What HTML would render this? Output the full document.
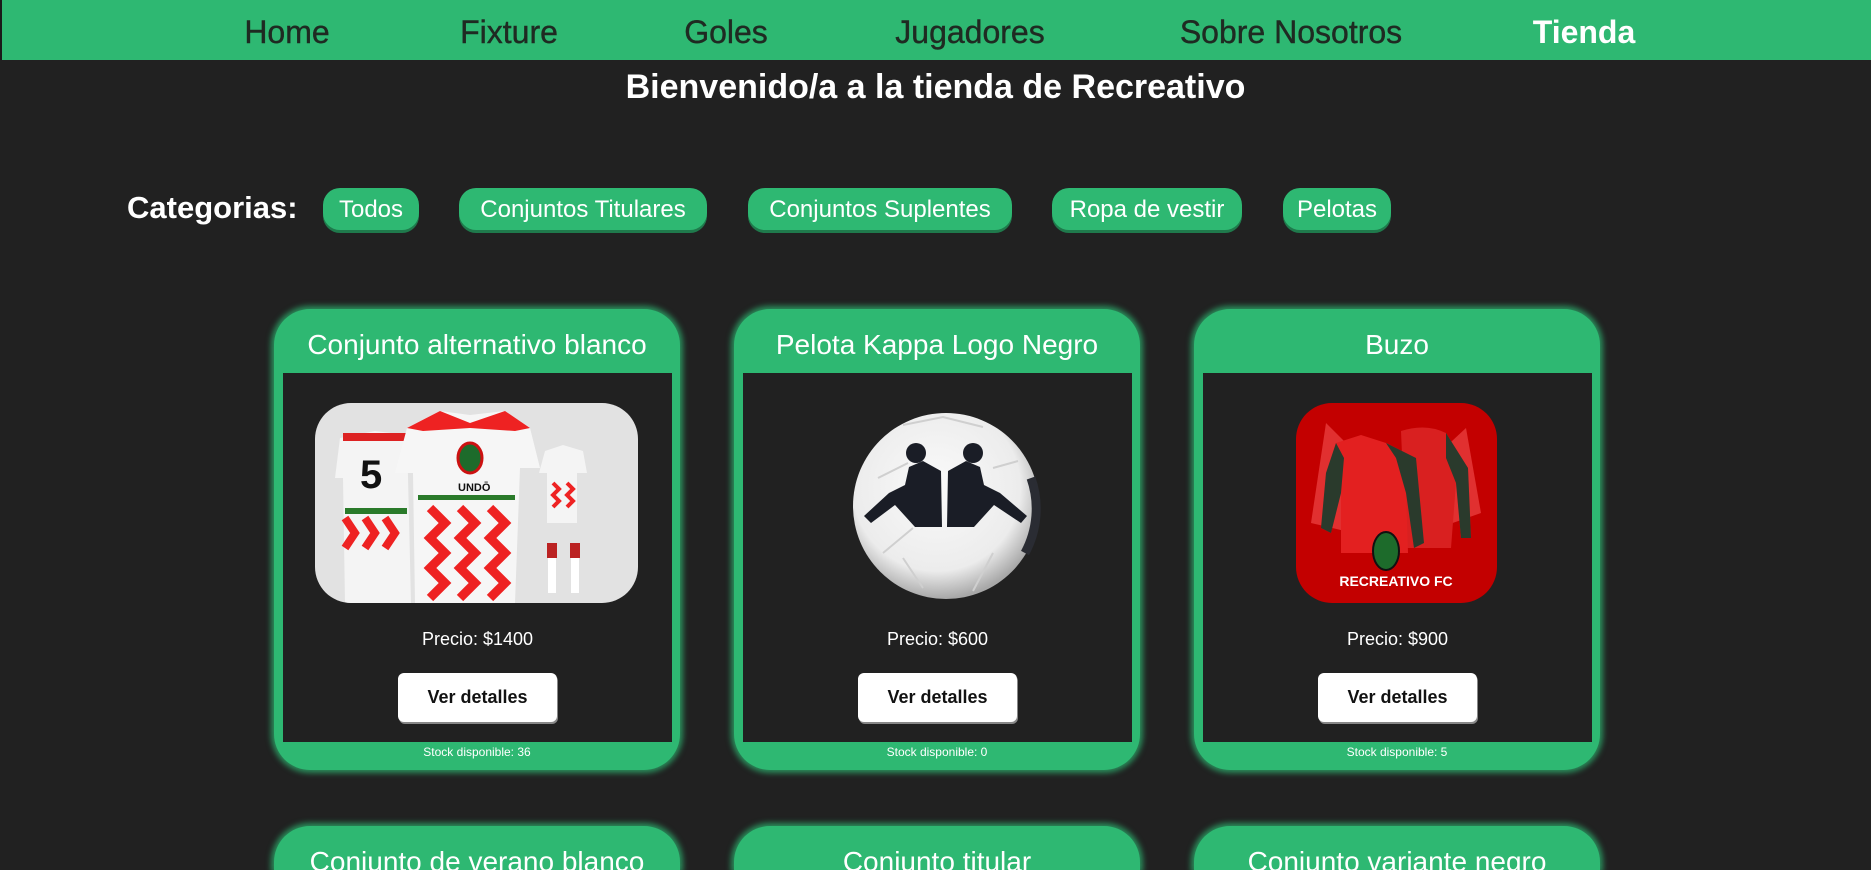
<!DOCTYPE html>
<html><head><meta charset="utf-8">
<style>
*{margin:0;padding:0;box-sizing:border-box}
html,body{width:1871px;height:870px;overflow:hidden}
body{background:#212121;font-family:"Liberation Sans",sans-serif;position:relative;color:#fff}
#wrap{position:absolute;left:0;top:0;width:1871px;height:870px;overflow:hidden}
.nav{position:absolute;left:0;top:0;width:1871px;height:60px;background:#2eb872;border-left:2px solid #1a1a1a}
.nav span{position:absolute;top:14px;font-size:32px;color:#1f2a22;transform:translateX(-50%);white-space:nowrap;-webkit-text-stroke:0.4px #1f2a22}
.nav span.act{color:#fff;font-weight:bold;-webkit-text-stroke:0}
h1{position:absolute;top:68px;left:0;width:1871px;text-align:center;font-size:34px;font-weight:bold;white-space:nowrap}
.cat{position:absolute;left:127px;top:190px;font-size:31px;font-weight:bold}
.pill{position:absolute;top:188px;height:42px;background:#2eb872;border-radius:17px;box-shadow:0 3px 0 #1f7a4c;font-size:24px;line-height:44px;text-align:center;white-space:nowrap}
.card{position:absolute;width:406px;height:461px;background:#2eb872;border-radius:36px;box-shadow:0 0 6px 3px #2a8f5c}
.card.short{height:44px;border-radius:36px 36px 0 0;overflow:hidden}
.card .t{position:absolute;top:4px;left:0;width:100%;height:64px;line-height:64px;text-align:center;font-size:28px;white-space:nowrap}
.card .in{position:absolute;left:9px;top:64px;width:389px;height:369px;background:#212121}
.pr{position:absolute;top:256px;width:100%;text-align:center;font-size:18px}
.btn{position:absolute;left:115px;top:300px;width:159px;height:49px;background:#fff;border-radius:6px;box-shadow:1px 2px 0 #888;color:#111;font-weight:bold;font-size:18px;line-height:49px;text-align:center}
.stk{position:absolute;top:436px;width:100%;text-align:center;font-size:12px}
</style></head><body><div id="wrap">
<div class="nav">
<span style="left:285px">Home</span>
<span style="left:507px">Fixture</span>
<span style="left:724px">Goles</span>
<span style="left:968px">Jugadores</span>
<span style="left:1289px">Sobre Nosotros</span>
<span class="act" style="left:1582px">Tienda</span>
</div>
<h1>Bienvenido/a a la tienda de Recreativo</h1>
<div class="cat">Categorias:</div>
<div class="pill" style="left:323px;width:96px">Todos</div>
<div class="pill" style="left:459px;width:248px">Conjuntos Titulares</div>
<div class="pill" style="left:748px;width:264px">Conjuntos Suplentes</div>
<div class="pill" style="left:1052px;width:190px">Ropa de vestir</div>
<div class="pill" style="left:1283px;width:108px">Pelotas</div>

<div class="card" style="left:274px;top:309px">
<div class="t">Conjunto alternativo blanco</div>
<div class="in">
<svg style="position:absolute;left:32px;top:30px" width="323" height="200" viewBox="0 0 323 200">
<defs><clipPath id="c1"><rect width="323" height="200" rx="36"/></clipPath></defs>
<g clip-path="url(#c1)">
<rect width="323" height="200" fill="#e2e2e2"/>
<path d="M25 35 L60 28 L92 32 L96 200 L30 200 L28 75 L20 75Z" fill="#f4f4f4"/>
<path d="M28 30 L92 30 L92 38 L28 38Z" fill="#d22"/>
<text x="45" y="85" font-size="40" font-weight="bold" fill="#111" font-family="Liberation Sans">5</text>
<path d="M30 105 h62 v6 h-62z" fill="#2a7a2a"/>
<path d="M30 115 l10 15 -10 15 M50 115 l10 15 -10 15 M70 115 l10 15 -10 15" stroke="#e22" stroke-width="8" fill="none"/>
<path d="M92 25 L125 8 L155 12 L190 8 L215 25 L225 65 L205 65 L200 200 L100 200 L98 70 L80 70Z" fill="#f6f6f6"/>
<path d="M92 25 L125 8 L155 20 L190 8 L215 25 L200 28 L155 25 L108 28Z" fill="#e22"/>
<ellipse cx="155" cy="55" rx="12" ry="15" fill="#1d6b2b" stroke="#c11" stroke-width="3"/>
<text x="143" y="88" font-size="11" font-weight="bold" fill="#111" font-family="Liberation Sans">UNDŌ</text>
<path d="M103 92 h97 v5 h-97z" fill="#2a7a2a"/>
<path d="M115 105 l15 15 -15 15 15 15 -15 15 15 15 -15 15 M145 105 l15 15 -15 15 15 15 -15 15 15 15 -15 15 M175 105 l15 15 -15 15 15 15 -15 15 15 15 -15 15" stroke="#e22" stroke-width="9" fill="none"/>
<path d="M230 48 L248 42 L268 48 L272 70 L262 70 L262 120 L232 120 L232 70 L224 70Z" fill="#f4f4f4"/>
<path d="M238 80 l6 6 -6 6 6 6 -6 6 M252 80 l6 6 -6 6 6 6 -6 6" stroke="#e22" stroke-width="4" fill="none"/>
<rect x="232" y="140" width="10" height="15" fill="#b22"/><rect x="255" y="140" width="10" height="15" fill="#b22"/>
<rect x="233" y="155" width="8" height="35" fill="#fff"/><rect x="256" y="155" width="8" height="35" fill="#fff"/>
</g></svg>
<div class="pr">Precio: $1400</div>
<div class="btn">Ver detalles</div>
</div>
<div class="stk">Stock disponible: 36</div>
</div>

<div class="card" style="left:734px;top:309px">
<div class="t">Pelota Kappa Logo Negro</div>
<div class="in">
<svg style="position:absolute;left:100px;top:30px" width="200" height="200" viewBox="0 0 200 200">
<defs><radialGradient id="g" cx="45%" cy="40%" r="60%"><stop offset="0" stop-color="#fafafa"/><stop offset="0.75" stop-color="#ececec"/><stop offset="1" stop-color="#a8a8a8"/></radialGradient></defs>
<circle cx="103" cy="103" r="93" fill="url(#g)"/>
<path d="M188 75 A93 93 0 0 1 182 150" stroke="#2a2c33" stroke-width="9" fill="none"/>
<path d="M60 22 L100 14 L140 24 M35 75 L65 60 M150 65 L175 58 M60 155 L80 185 M150 150 L130 188 M70 125 L40 150" stroke="#cfcfcf" stroke-width="2" fill="none"/>
<circle cx="73" cy="50" r="10" fill="#1a1d26"/>
<path d="M80 58 L98 68 L99 124 L72 124 L52 102 L28 120 L21 113 L46 90 L62 82 L66 64 Z" fill="#1a1d26"/>
<circle cx="130" cy="50" r="10" fill="#1a1d26"/>
<path d="M123 58 L105 68 L104 124 L131 124 L151 102 L178 120 L184 113 L157 90 L141 82 L137 64 Z" fill="#1a1d26"/>
</svg>
<div class="pr">Precio: $600</div>
<div class="btn">Ver detalles</div>
</div>
<div class="stk">Stock disponible: 0</div>
</div>

<div class="card" style="left:1194px;top:309px">
<div class="t">Buzo</div>
<div class="in">
<svg style="position:absolute;left:93px;top:30px" width="201" height="200" viewBox="0 0 201 200">
<defs><clipPath id="c3"><rect width="201" height="200" rx="36"/></clipPath></defs>
<g clip-path="url(#c3)">
<rect width="201" height="200" fill="#c30000"/>
<path d="M30 20 L100 90 L170 25 L185 110 L100 140 L15 120Z" fill="#e13030"/>
<path d="M105 28 Q130 20 150 30 L172 65 L175 135 L165 135 L160 80 L155 145 L110 145Z" fill="#d92020"/>
<path d="M150 30 L172 65 L175 135 L165 135 L160 80 L150 55Z" fill="#2a3a2c"/>
<path d="M40 40 L65 32 L90 40 L120 55 L128 140 L118 145 L110 90 L112 150 L45 150 L45 90 L35 130 L25 125 L30 70Z" fill="#e32020"/>
<path d="M40 40 L30 70 L25 125 L35 130 L45 90 L48 55Z M90 40 L120 55 L128 140 L118 145 L110 90 L100 55Z" fill="#2a3a2c"/>
<ellipse cx="90" cy="148" rx="13" ry="19" fill="#1d6b2b" stroke="#111" stroke-width="2"/>
<text x="100" y="183" text-anchor="middle" font-size="14" font-weight="bold" fill="#fff" font-family="Liberation Sans">RECREATIVO FC</text>
</g></svg>
<div class="pr">Precio: $900</div>
<div class="btn">Ver detalles</div>
</div>
<div class="stk">Stock disponible: 5</div>
</div>

<div class="card short" style="left:274px;top:826px"><div class="t">Conjunto de verano blanco</div></div>
<div class="card short" style="left:734px;top:826px"><div class="t">Conjunto titular</div></div>
<div class="card short" style="left:1194px;top:826px"><div class="t">Conjunto variante negro</div></div>
</div></body></html>
